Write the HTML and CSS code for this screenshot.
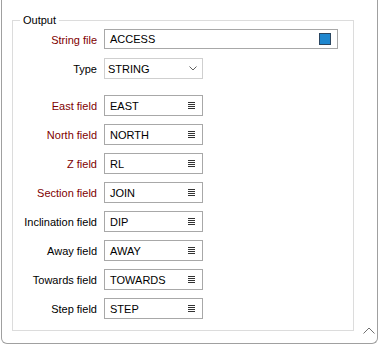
FILE: index.html
```html
<!DOCTYPE html>
<html lang="en">
<head>
    <meta charset="UTF-8">
    <title>Output</title>
    <link rel="stylesheet" href="styles.css">
</head>
<body>
    <div class="panel">
        <fieldset class="group">
            <legend>Output</legend>
            <div class="form">
                <label class="req">String file</label>
                <div class="box file-box">
                    <span>ACCESS</span>
                    <span class="swatch"></span>
                </div>

                <label class="type-label">Type</label>
                <div class="box combo type-box">
                    <span>STRING</span>
                    <svg class="chevron" width="8" height="5" viewBox="0 0 8 5"><path d="M0.5 0.5 L4 4 L7.5 0.5" fill="none" stroke="#606060" stroke-width="1"/></svg>
                </div>

                <label class="req">East field</label>
                <div class="box field"><span>EAST</span><span class="list-icon"></span></div>

                <label class="req">North field</label>
                <div class="box field"><span>NORTH</span><span class="list-icon"></span></div>

                <label class="req">Z field</label>
                <div class="box field"><span>RL</span><span class="list-icon"></span></div>

                <label class="req">Section field</label>
                <div class="box field"><span>JOIN</span><span class="list-icon"></span></div>

                <label>Inclination field</label>
                <div class="box field"><span>DIP</span><span class="list-icon"></span></div>

                <label>Away field</label>
                <div class="box field"><span>AWAY</span><span class="list-icon"></span></div>

                <label>Towards field</label>
                <div class="box field"><span>TOWARDS</span><span class="list-icon"></span></div>

                <label>Step field</label>
                <div class="box field"><span>STEP</span><span class="list-icon"></span></div>
            </div>
        </fieldset>

        <svg class="scroll-up" width="12" height="7" viewBox="0 0 12 7"><path d="M0.5 6.5 L6 1 L11.5 6.5" fill="none" stroke="#707070" stroke-width="1"/></svg>
    </div>
</body>
</html>
```

FILE: styles.css
```css
* {
    margin: 0;
    padding: 0;
    box-sizing: border-box;
}

body {
    font-family: 'Liberation Sans', Arial, sans-serif;
    font-size: 11px;
    color: #000;
    background: #fff;
}

.panel {
    position: relative;
    width: 377px;
    height: 344px;
    margin-left: 1px;
    padding-top: 14px;
    border: 1px solid #a0a0a0;
    border-top: none;
    border-radius: 0 0 6px 6px;
}

.group {
    width: 342px;
    height: 317px;
    margin-left: 10px;
    border: 1px solid #dcdcdc;
    padding: 0;
}

.group legend {
    margin-left: 7px;
    padding: 0 3px;
    line-height: 13px;
}

.form {
    display: grid;
    grid-template-columns: 84px auto;
    column-gap: 7px;
    row-gap: 8px;
    align-items: center;
    padding-top: 2px;
}

.form label {
    text-align: right;
    white-space: nowrap;
}

.req {
    color: #800000;
}

.box {
    display: flex;
    align-items: center;
    justify-content: space-between;
    height: 21px;
    width: 99px;
    padding: 0 6px 0 5px;
    border: 1px solid #a8a8a8;
    background: #fff;
    white-space: nowrap;
}

.file-box {
    width: 234px;
    height: 20px;
    margin-bottom: 1px;
}

.swatch {
    width: 12px;
    height: 12px;
    background: #1f87cf;
    border: 1px solid #2b4660;
}

.combo {
    border-color: #cfcfcf;
    padding: 0 5px 0 3px;
}

.type-label,
.type-box {
    margin-bottom: 8px;
}

.list-icon {
    width: 7px;
    height: 7px;
    margin-right: 1px;
    background: repeating-linear-gradient(#333 0 1px, transparent 1px 2px);
}

.scroll-up {
    position: absolute;
    right: 2px;
    bottom: 9px;
}
```
